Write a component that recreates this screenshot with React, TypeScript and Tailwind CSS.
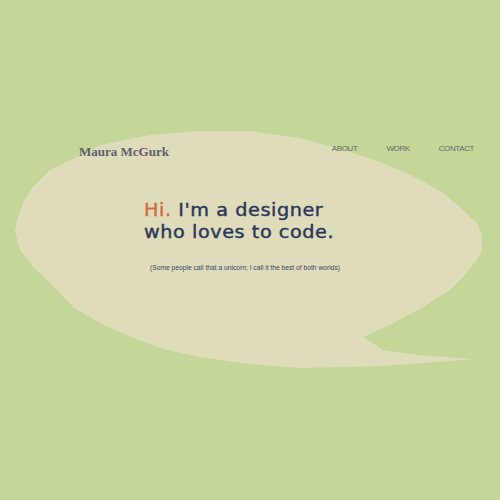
export default function App() {
  // outline of the speech bubble, traced by hand
  const bubble =
    "M15 232 L17 220 L23 203 L33 187 L50 170 L77 157 L100 145 L150 135 L200 131 L250 131 L300 138 L350 152 L383 163 L417 178 L443 193 L463 210 L477 223 L482 235 L482 250 L477 260 L463 277 L450 290 L423 307 L390 325 L363 337 L383 350 L417 355 L473 359 L450 361 L383 366 L300 368 L250 364 L200 357 L167 350 L133 338 L100 323 L73 307 L50 283 L33 267 L20 250 Z";

  return (
    <div className="relative w-full h-[500px] overflow-hidden bg-[#c4d798]">
      <svg className="absolute inset-0" width="500" height="500" viewBox="0 0 500 500">
        <path d={bubble} fill="#dfdcbb" />
      </svg>

      <div className="relative">
        <header className="flex items-end justify-between pt-[145px] pl-[79px] pr-[26px]">
          <a className="text-[13px] font-bold leading-none text-[#5d606c] font-['Liberation_Serif',serif]">
            Maura McGurk
          </a>
          <nav className="flex gap-[29px] pb-[5px] text-[8px] leading-none tracking-[-0.05em] text-[#66686f] font-['Liberation_Sans',sans-serif]">
            <a>ABOUT</a>
            <a>WORK</a>
            <a>CONTACT</a>
          </nav>
        </header>

        <section className="pl-[144px] pt-[41px]">
          <h1 className="origin-left scale-x-[1.13] text-[17px] leading-[22px] tracking-[0.5px] text-[#2b365a] [-webkit-text-stroke:0.4px_currentColor] font-['DejaVu_Sans',sans-serif]">
            <span className="text-[#d36c3d]">Hi.</span> I'm a designer
            <br />
            who loves to code.
          </h1>
          <p className="mt-[20px] pl-[6px] text-[6.7px] text-[#3a4463] font-['Liberation_Sans',sans-serif]">
            (Some people call that a unicorn; I call it the best of both worlds)
          </p>
        </section>
      </div>
    </div>
  );
}
